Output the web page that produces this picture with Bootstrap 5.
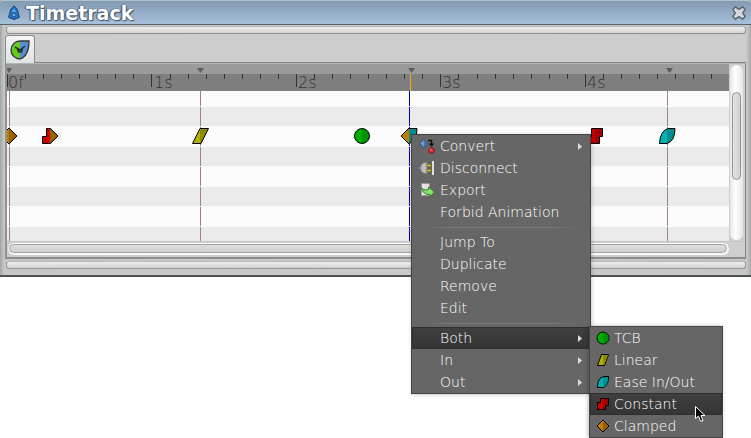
<!DOCTYPE html>
<html lang="en">
<head>
<meta charset="utf-8">
<meta name="viewport" content="width=device-width, initial-scale=1">
<title>Timetrack</title>
<link href="https://cdn.jsdelivr.net/npm/bootstrap@5.3.0/dist/css/bootstrap.min.css" rel="stylesheet">
<style>
body{font-family:"DejaVu Sans",sans-serif;font-size:14px;background:#fff}
.dock{border-bottom:2px solid #4d5155;background:linear-gradient(90deg,#a0a4a3 0,#c6c8c7 4px,#cacaca 50%,#c6c8c7 calc(100% - 4px),#a4a8a8);padding-bottom:5px}
.titlebar{height:25px;background:linear-gradient(#829bb1,#a7bfda);border-top:1px solid #b0c2d0;border-bottom:1px solid #56616c;padding:0 4px 0 7px;border-radius:4px 4px 0 0}
.titlebar h1{font-size:19px;line-height:24px;font-weight:700;color:#fff;text-shadow:0 0 1px #3d5063,1px 1px 1px #3d5063,-1px 0 1px #3d5063;margin-left:5px}
.titlebar button{width:16px;height:16px}
.grip{height:8px;margin:1px 5px 1px 6px;border:1px solid #959595;border-top-color:#b5b5b5;border-radius:3px;background:linear-gradient(#eee,#d2d2d2)}
.tabstrip{height:28px;margin:0 5px;background:#cdcdcd;border-bottom:1px solid #858585}
.tabbtn{width:30px;height:28px;background:linear-gradient(#f5f5f5,#e2e2e2);border:1px solid #8b8b8b;border-bottom:0;border-radius:3px 3px 0 0}
.panel{margin:0 5px 2px;border:1px solid #858585;border-top-color:#b5b5b5;border-left:2px solid #929292;background:#cecece;border-bottom:2px solid #8c8c8c}
.timeline{height:177px;background:#fcfcfc}
#track{width:100%;height:100%}
.vtrough{width:16px;padding:1px 2px 1px 1px}
.vtrough>div{height:100%;border-radius:7px;background:linear-gradient(90deg,#e5e5e5,#fff 40%,#e5e5e5);padding:27px 2px 0}
.vtrough>div>div{height:88px;border:1px solid #959595;border-radius:5px;background:linear-gradient(90deg,#e4e4e4,#cfcfcf)}
.htrough{height:16px;padding:1px 16px 2px 1px;border-top:1px solid #c5c5c5}
.htrough>div{height:12px;border-radius:7px;background:#f9f9f9;padding:1px 2px 2px 1px}
.htrough>div>div{height:9px;border:1px solid #a3a3a3;border-radius:5px;background:linear-gradient(#ddd,#cfcfcf)}
.popmenu{position:absolute;background:#666;border:1px solid #434343;color:#fff;box-shadow:1px 1px 4px #0003}
.mainmenu{left:411px;top:134px;width:180px}
.submenu{left:177px;top:-1px;width:134px;box-shadow:-1px 0 4px #0004}
.entry{height:22px;width:100%;padding:0 8px 0 7px;border:0;background:none;color:#fff;font-weight:200;text-align:left;line-height:22px}
.submenu .entry{padding-left:5px}
.entry svg.pic{width:16px;height:16px;margin-right:5px;flex:none}
.submenu .entry svg.pic{margin-right:3px}
.entry.chosen{background:linear-gradient(#404040,#343434);box-shadow:inset 0 0 0 1px #2f2f2f}
.divide{height:8px;margin:0 10px;background:linear-gradient(90deg,#666,#7b7b7b 20%,#7b7b7b 80%,#666) 0 4px/100% 1px no-repeat}
.pointer{position:absolute;left:695px;top:406px}
.ruler{font-size:16px;font-weight:200}
</style>
<script src="https://cdn.jsdelivr.net/npm/bootstrap@5.3.0/dist/js/bootstrap.bundle.min.js"></script>
</head>
<body class="position-relative min-vh-100">
<svg width="0" height="0" class="position-absolute" aria-hidden="true">
  <defs>
    <g id="tcb"><circle cx="8" cy="8" r="6" fill="#00ae00" stroke="#000"/><path d="M8 2.5a5.5 5.5 0 0 1 0 11z" fill="#009000"/></g>
    <g id="linear"><path d="M6.500 2.500H13.500L9.500 13.500H2.500z" fill="#b0b000" stroke="#000"/><path d="M8 3h5l-4 10H8z" fill="#8d8d00"/></g>
    <g id="ease"><path d="M13.500 2.500H9C4.500 3.500 2.500 7 2.500 13.500H8C12 12.500 13.500 8 13.500 2.500z" fill="#00b0b0" stroke="#000"/><path d="M8 3.500L9 3h4c0 5-1.500 9-5 10z" fill="#008f8f"/></g>
    <g id="constant"><path d="M5.500 2.500H13.500V9.500H10.500V13.500H2.500V6.500H5.500z" fill="#c90000" stroke="#000"/><path d="M8 3h5v6h-3v4H8z" fill="#a00000"/></g>
    <g id="clamped"><path d="M8 2L14 8L8 14L2 8z" fill="#c07c00" stroke="#000"/><path d="M8 2.700L13.300 8L8 13.300z" fill="#976000"/></g>
  </defs>
</svg>

<main class="dock d-flex flex-column">
  <header class="titlebar d-flex align-items-center">
    <svg width="14" height="16" viewBox="0 0 14 16" aria-hidden="true"><path d="M7 .8C4 3.500 2.500 6.500 2.800 8.500L1.500 12Q3 13.500 4.500 13.500Q7 15.500 9.500 13.500Q11 13.500 12.500 12L11.200 8.500C11.500 6.500 10 3.500 7 .8z" fill="#2874c4" stroke="#173b63"/><path d="M5 7Q7 1 9 7z" fill="#5ba9ec"/><circle cx="7" cy="10" r="2" fill="#69b4ee" stroke="#154d8c"/></svg>
    <h1 class="mb-0">Timetrack</h1>
    <button type="button" class="btn border-0 p-0 ms-auto d-flex" aria-label="Close">
      <svg width="16" height="16" viewBox="0 0 16 16"><path d="M4.500 1.800L8 4.300l3.500-2.500 2.700 2.700L11.700 8l2.500 3.500-2.700 2.700L8 11.700l-3.500 2.500-2.700-2.700L4.300 8 1.800 4.500z" fill="#d6d6d6" stroke="#596775" stroke-width="1.500" stroke-linejoin="round"/></svg>
    </button>
  </header>
  <div class="grip"></div>
  <nav class="tabstrip" aria-label="Panels">
    <button type="button" class="tabbtn d-flex align-items-center justify-content-center p-0" aria-label="Timetrack panel">
      <svg width="22" height="22" viewBox="0 0 22 22"><path d="M11 2A9 9 0 1 0 11 20z" fill="#69c91c"/><path d="M11 2h9Q20 17 11 20z" fill="#5b8ccb"/><path d="M11 2H20Q20 17 11 20A9 9 0 0 1 11 2z" fill="none" stroke="#30383b" stroke-width="1.300"/><path d="M6 8l5 3 5-4M8.500 10l1 3h3l1-4" fill="none" stroke="#22333a" stroke-width="1.500"/></svg>
    </button>
  </nav>
  <section class="panel">
    <div class="d-flex">
      <div class="timeline flex-grow-1 overflow-hidden">
        <svg id="track" class="d-block" role="img" aria-label="Animation timeline">
          <rect width="100%" height="10" fill="#9b9b9b"/>
          <rect y="10" width="100%" height="17" fill="#7f7f7f"/>
          <g fill="#eaeaea"><rect y="42" width="100%" height="20"/><rect y="82" width="100%" height="20"/><rect y="122" width="100%" height="20"/><rect y="162" width="100%" height="15"/></g>
          <g id="ticks" fill="#333"></g>
          <g class="ruler" fill="#333"><text x="1" y="24">0f</text><text x="147" y="24">1s</text><text x="291" y="24">2s</text><text x="435" y="24">3s</text><text x="580" y="24">4s</text></g>
          <g fill="#5d5d5d"><path d="M-1 4h6l-3 5z"/><path d="M190 4h7l-3.500 5z"/><path d="M401 4h7l-3.500 5z"/><path d="M659 4h7l-3.500 5z"/></g>
          <g fill="#a08080"><rect x="2" y="27" width="1" height="150"/><rect x="193" y="27" width="1" height="150"/><rect x="660" y="27" width="1" height="150"/></g>
          <rect x="403" y="10" width="1" height="17" fill="#ffa600"/>
          <rect x="402" y="27" width="1" height="150" fill="#0000b4"/>
          <g fill="#f6f6f6"><rect y="42" width="100%" height="1"/><rect y="62" width="100%" height="1"/><rect y="82" width="100%" height="1"/><rect y="102" width="100%" height="1"/><rect y="122" width="100%" height="1"/><rect y="142" width="100%" height="1"/><rect y="162" width="100%" height="1"/></g>
          <g id="points"></g>
        </svg>
      </div>
      <div class="vtrough"><div><div></div></div></div>
    </div>
    <div class="htrough"><div><div></div></div></div>
  </section>
  <div class="grip mt-0"></div>
</main>

<div class="popmenu mainmenu" role="menu">
  <button type="button" class="entry d-flex align-items-center" role="menuitem"><svg class="pic" viewBox="0 0 16 16"><path d="M4.500 1L8 5.500 4.500 10 1 5.500z" fill="#7ba7dc" stroke="#26466f"/><path d="M4.500 1v9L8 5.500z" fill="#4a78ae"/><path d="M9 2.500h3.500V7M10.500 5.500l2 2.200 2-2.200" fill="none" stroke="#111" stroke-width="1.300"/><circle cx="12.500" cy="12.500" r="2.700" fill="#e33030" stroke="#8b0d0d"/><circle cx="11.800" cy="11.700" r=".8" fill="#ff9a90"/></svg><span>Convert</span><svg class="ms-auto" width="4" height="7"><path d="M0 0l4 3.500-4 3.500z" fill="#ddd"/></svg></button>
  <button type="button" class="entry d-flex align-items-center" role="menuitem"><svg class="pic" viewBox="0 0 16 16"><path d="M0 7h2v2H0z" fill="#999"/><path d="M8 2.500H6Q1.500 3 1.500 8T6 13.500H8z" fill="#bcbcbc" stroke="#777"/><path d="M8 4.500h4v2H8zM8 9.500h4v2H8z" fill="#e8bf13" stroke="#74610b" stroke-width=".5"/><path d="M13 1h2v14h-2z" fill="#dedede"/></svg><span>Disconnect</span></button>
  <button type="button" class="entry d-flex align-items-center" role="menuitem"><svg class="pic" viewBox="0 0 16 16"><path d="M2.500 1.500h8v12h-8z" fill="#e1e1e1" stroke="#999"/><path d="M2.500 5.500Q4 9 9.500 7.500V5l6 5-4.500 4.500v-2Q4 13 2.500 5.500z" fill="#88df71" stroke="#327e27"/></svg><span>Export</span></button>
  <button type="button" class="entry d-flex align-items-center" role="menuitem"><svg class="pic"></svg><span>Forbid Animation</span></button>
  <div class="divide" role="separator"></div>
  <button type="button" class="entry d-flex align-items-center" role="menuitem"><svg class="pic"></svg><span>Jump To</span></button>
  <button type="button" class="entry d-flex align-items-center" role="menuitem"><svg class="pic"></svg><span>Duplicate</span></button>
  <button type="button" class="entry d-flex align-items-center" role="menuitem"><svg class="pic"></svg><span>Remove</span></button>
  <button type="button" class="entry d-flex align-items-center" role="menuitem"><svg class="pic"></svg><span>Edit</span></button>
  <div class="divide" role="separator"></div>
  <div class="position-relative">
    <button type="button" class="entry chosen d-flex align-items-center" role="menuitem" aria-expanded="true"><svg class="pic"></svg><span>Both</span><svg class="ms-auto" width="4" height="7"><path d="M0 0l4 3.500-4 3.500z" fill="#ddd"/></svg></button>
    <div class="popmenu submenu" role="menu">
      <button type="button" class="entry d-flex align-items-center" role="menuitem"><svg class="pic" viewBox="0 0 16 16"><use href="#tcb"/></svg><span>TCB</span></button>
      <button type="button" class="entry d-flex align-items-center" role="menuitem"><svg class="pic" viewBox="0 0 16 16"><use href="#linear"/></svg><span>Linear</span></button>
      <button type="button" class="entry d-flex align-items-center" role="menuitem"><svg class="pic" viewBox="0 0 16 16"><use href="#ease"/></svg><span>Ease In/Out</span></button>
      <button type="button" class="entry chosen d-flex align-items-center" role="menuitem"><svg class="pic" viewBox="0 0 16 16"><use href="#constant"/></svg><span>Constant</span></button>
      <button type="button" class="entry d-flex align-items-center" role="menuitem"><svg class="pic" viewBox="0 0 16 16"><use href="#clamped"/></svg><span>Clamped</span></button>
    </div>
  </div>
  <button type="button" class="entry d-flex align-items-center" role="menuitem"><svg class="pic"></svg><span>In</span><svg class="ms-auto" width="4" height="7"><path d="M0 0l4 3.500-4 3.500z" fill="#ddd"/></svg></button>
  <button type="button" class="entry d-flex align-items-center" role="menuitem"><svg class="pic"></svg><span>Out</span><svg class="ms-auto" width="4" height="7"><path d="M0 0l4 3.500-4 3.500z" fill="#ddd"/></svg></button>
</div>
<svg class="pointer" width="11" height="17" viewBox="0 0 11 17" aria-hidden="true"><path d="M.5.500v12l3-2.500 2 5h2.500l-2-5.500h4z" fill="#000" stroke="#fff"/></svg>
<script>
const NS='http://www.w3.org/2000/svg';
const make=(tag,attrs,parent)=>{const n=document.createElementNS(NS,tag);for(const k in attrs)n.setAttribute(k,attrs[k]);parent.append(n);return n;};
// Eight ticks make one second; the first of each eight is long.
for(let i=0;i<=39;i++)make('rect',{x:Math.round(i*18.06),y:10,width:1,height:i%8?5:13},document.getElementById('ticks'));
// Each waypoint has a left (in) half and a right (out) half.
const pts=document.getElementById('points');
const shapes={
 clamped:['M8 0L16 8L8 16L0 8z','#c07c00','#976000'],
 constant:['M4.500.500H15.500V8.500H12.500V15.500H.500V8.500H4.500z','#c90000','#a00000'],
 linear:['M8 .5H16.500L9 15.500H.500z','#b0b000','#8d8d00'],
 tcb:['M8 .5A7.500 7.500 0 0 1 8 15.500A7.500 7.500 0 0 1 8 .5z','#00ae00','#009000'],
 ease:['M16 .5H9Q1 3 .5 15.500H8Q16 13 16 .5z','#00b0b0','#008f8f']
};
[[2,'clamped','clamped'],[43,'constant','clamped'],[193,'linear','linear'],[355,'tcb','tcb'],[402,'clamped','ease'],[588,'constant','constant'],[660,'ease','ease']].forEach(([x,a,b])=>{
  [a,b].forEach((name,side)=>{
    const s=make('svg',{x:side?x:x-9,y:63,width:9,height:18,viewBox:side?'8 -1 9 18':'-1 -1 9 18'},pts);
    make('path',{d:shapes[name][0],fill:shapes[name][side+1],stroke:'#000'},s);
  });
});
</script>
</body>
</html>
